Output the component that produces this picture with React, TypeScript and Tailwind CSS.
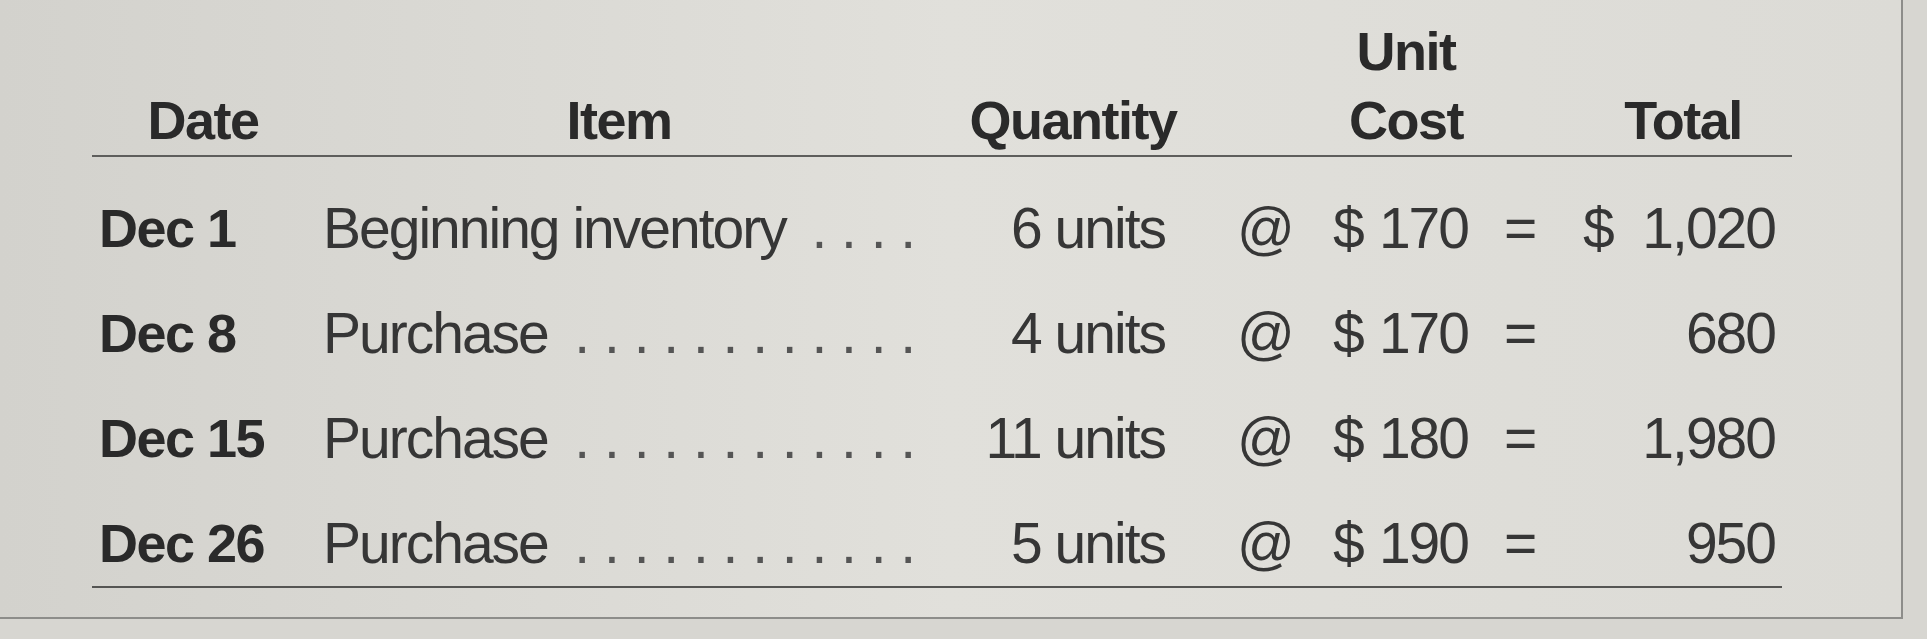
import React from "react";

const rows = [
  { date: "Dec 1", item: "Beginning inventory", dots: "....", qty: "6 units", cost: "170", dollar: true, total: "1,020" },
  { date: "Dec 8", item: "Purchase", dots: "............", qty: "4 units", cost: "170", dollar: false, total: "680" },
  { date: "Dec 15", item: "Purchase", dots: "............", qty: "11 units", cost: "180", dollar: false, total: "1,980" },
  { date: "Dec 26", item: "Purchase", dots: "............", qty: "5 units", cost: "190", dollar: false, total: "950" },
];

const App = () => {
  return (
    <div className="w-[1927px] h-[639px] bg-[#d7d6d1] overflow-hidden font-['Liberation_Sans',Arial,sans-serif]">
      {/* Panel */}
      <div className="w-[1903px] h-[619px] border-r-2 border-b-2 border-[#8d8d8a] bg-linear-to-r from-[#d3d2cd] via-[#e1e0db] to-[#dcdbd6] pl-[92px]">
        {/* Header */}
        <div className="w-[1700px] h-[157px] pt-[17px] border-b-2 border-[#5e5e5c] flex items-end text-[54px] leading-[69px] font-bold text-[#2a2a2a] tracking-[-1.5px]">
          <div className="w-[222px] text-center">Date</div>
          <div className="w-[610px] text-center">Item</div>
          <div className="w-[298px] text-center">Quantity</div>
          <div className="w-[368px] text-center">
            Unit
            <br />
            Cost
          </div>
          <div className="w-[186px] text-center">Total</div>
        </div>

        {/* Rows */}
        <div className="w-[1690px] pt-[41px] pb-[13px] border-b-2 border-[#555553] flex flex-col gap-[45px] text-[57px] leading-[60px] text-[#363636] tracking-[-2px]">
          {rows.map((row) => (
            <div key={row.date} className="flex">
              <div className="w-[231px] pl-[7px] text-[54px] font-bold text-[#2a2a2a] tracking-[-1.5px]">
                {row.date}
              </div>
              <div className="w-[607px] flex justify-between">
                <span>{row.item}</span>
                <span className="tracking-[13.8px] text-[#555]">{row.dots}</span>
              </div>
              <div className="w-[235px] text-right">{row.qty}</div>
              <div className="w-[168px] pl-[72px]">@</div>
              <div className="w-[135px] flex justify-between">
                <span>$</span>
                <span>{row.cost}</span>
              </div>
              <div className="w-[115px] pl-[36px]">=</div>
              <div className="w-[192px] flex justify-between">
                <span>{row.dollar ? "$" : ""}</span>
                <span>{row.total}</span>
              </div>
            </div>
          ))}
        </div>
      </div>
    </div>
  );
};

export default App;
